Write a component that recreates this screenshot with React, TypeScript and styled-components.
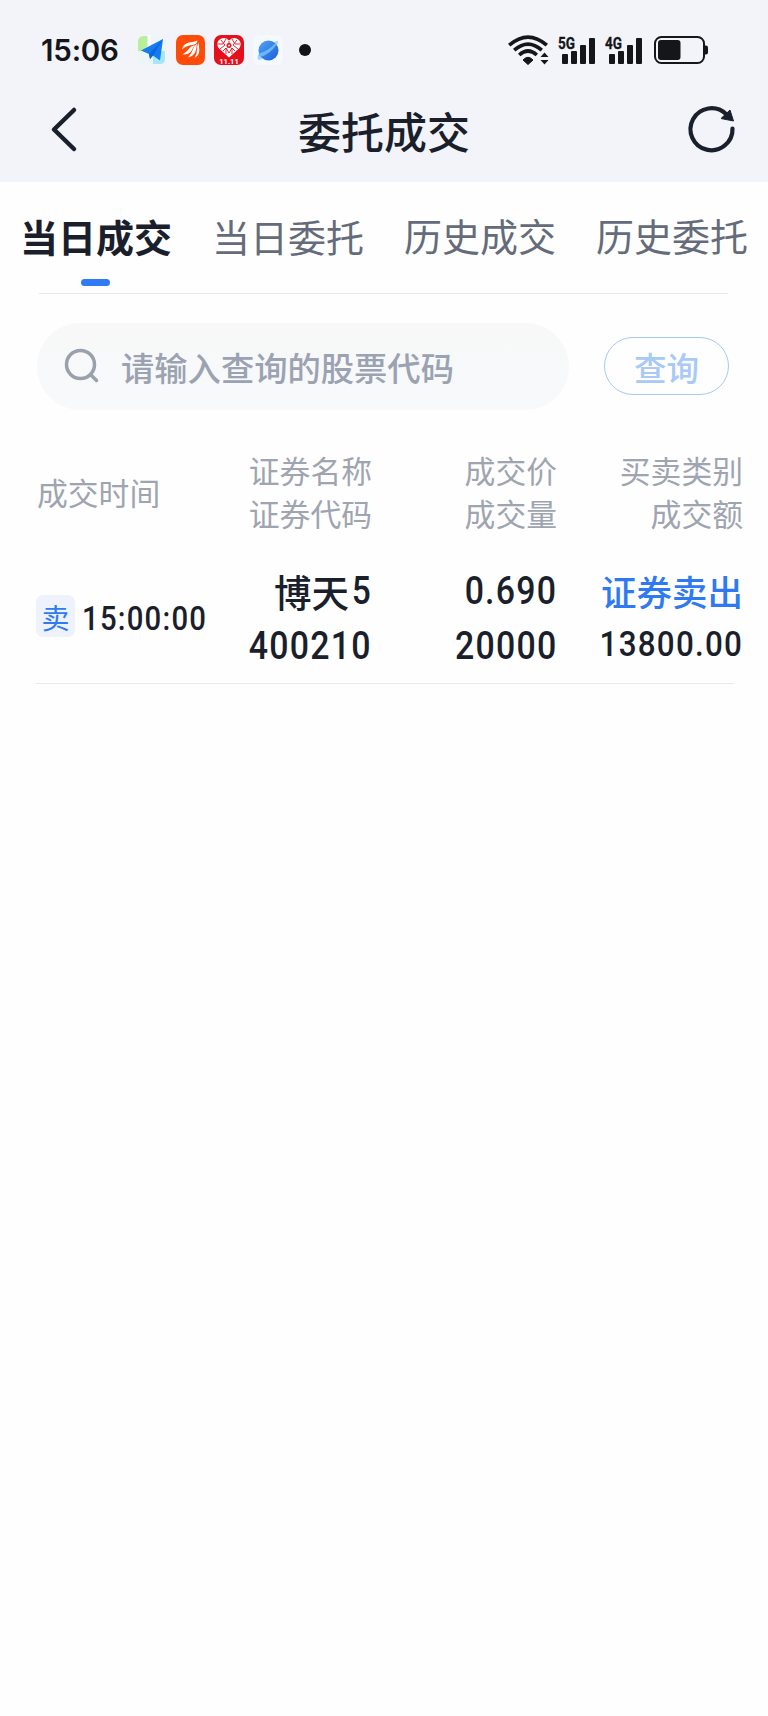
import React from 'react';
import styled, { createGlobalStyle } from 'styled-components';

const cjk = `"Noto Sans CJK SC", sans-serif`;

const GlobalStyle = createGlobalStyle`
  *, *::before, *::after { box-sizing: border-box; }
  body { margin: 0; background: #fefefe; }
  button, input { font: inherit; }
`;

const Screen = styled.div`
  display: flex;
  flex-direction: column;
  width: 768px;
  min-height: 1716px;
  background: #fefefe;
  color: #1a202b;
  font-family: ${cjk};
`;

const Top = styled.header`
  height: 182px;
  background: #f3f4f9;
`;

const StatusBar = styled.div`
  display: flex;
  align-items: center;
  height: 80px;
  padding: 20px 59px 0 41px;
  color: #14161a;
`;

const Clock = styled.span`
  width: 95px;
  font: 600 29.5px/60px Inter, sans-serif;
  letter-spacing: -0.2px;
  white-space: nowrap;
`;

const AppIcons = styled.div`
  display: flex;
  align-items: center;
  gap: 9px;
`;

const Signals = styled.div`
  display: flex;
  align-items: center;
  margin-left: auto;
`;

const SignalGroup = styled.div`
  display: flex;
  gap: 7px;
  margin: 0 10px 0 7px;
`;

const NavBar = styled.div`
  display: grid;
  grid-template-columns: 84px 1fr 84px;
  align-items: center;
  height: 101px;
`;

const NavButton = styled.button<{ $side: 'left' | 'right' }>`
  display: flex;
  justify-content: ${(p) => (p.$side === 'left' ? 'flex-end' : 'flex-start')};
  height: 101px;
  padding: ${(p) => (p.$side === 'left' ? '22px 5px 0 0' : '20px 0 0 0')};
  border: 0;
  background: none;
  color: #1a202b;
`;

const Title = styled.h1`
  margin: 0 0 1px;
  text-align: center;
  font-size: 43px;
  font-weight: 500;
  line-height: 60px;
`;

const Tabs = styled.nav`
  display: grid;
  grid-template-columns: repeat(4, 1fr);
  height: 111px;
`;

const Tab = styled.button<{ $active?: boolean; $raise?: boolean }>`
  display: flex;
  flex-direction: column;
  align-items: center;
  padding: ${(p) => (p.$raise ? 26 : 27)}px 0 0;
  border: 0;
  background: none;
  color: ${(p) => (p.$active ? '#1a202b' : '#646b7a')};
  font-size: 38px;
  font-weight: ${(p) => (p.$active ? 700 : 400)};
  line-height: 54px;
  white-space: nowrap;

  &::after {
    content: '';
    width: 29px;
    height: 7px;
    margin: 16px 1px 0 0;
    border-radius: 4px;
    background: ${(p) => (p.$active ? '#2f7af5' : 'transparent')};
  }
`;

const Divider = styled.hr<{ $left: number; $right: number }>`
  height: 1px;
  margin: 0 ${(p) => p.$right}px 0 ${(p) => p.$left}px;
  border: 0;
  background: #e8e9eb;
`;

const SearchRow = styled.form`
  display: flex;
  align-items: center;
  justify-content: space-between;
  height: 88px;
  margin: 28px 39px 0 37px;
`;

const SearchBox = styled.label`
  display: flex;
  align-items: center;
  width: 532px;
  height: 87px;
  padding-left: 27px;
  border-radius: 44px;
  background: linear-gradient(#f8f8f8, #f7f9fb);
`;

const Placeholder = styled.span`
  margin: 1px 0 0 21px;
  color: #9ba2b2;
  font-size: 33.3px;
  font-weight: 500;
  line-height: 48px;
  white-space: nowrap;
`;

const QueryButton = styled.button`
  width: 125px;
  height: 58px;
  padding: 1px 0 0;
  border: 1.5px solid #a9c8f3;
  border-radius: 29px;
  background: transparent;
  color: #a9c9f7;
  font-size: 32.5px;
  font-weight: 500;
  line-height: 52px;
`;

const columns = `
  display: grid;
  grid-template-columns: 176px 160px 185px 186px;
  padding-left: 36px;
`;

const HeadRow = styled.div`
  ${columns}
  align-items: center;
  margin-top: 38px;
  height: 86px;
  color: #9fa4b1;
  font-size: 30.8px;
  line-height: 43px;
`;

const HeadCell = styled.div<{ $align?: 'left' }>`
  display: flex;
  flex-direction: column;
  padding-left: ${(p) => (p.$align === 'left' ? 1 : 0)}px;
  text-align: ${(p) => p.$align ?? 'right'};
  white-space: nowrap;
`;

const TradeRow = styled.div`
  ${columns}
  align-items: center;
  height: 149px;
  padding-top: 16px;
`;

const TimeCell = styled.div`
  display: flex;
  align-items: center;
  margin-bottom: 1px;
`;

const SideBadge = styled.span`
  display: flex;
  align-items: center;
  justify-content: center;
  flex: none;
  width: 39px;
  height: 42px;
  margin-right: 7px;
  padding-top: 2px;
  border-radius: 7px;
  background: #edf2fd;
  color: #2f7af0;
  font-size: 28px;
  line-height: 40px;
`;

const Stack = styled.div`
  display: flex;
  flex-direction: column;
  align-items: flex-end;
  margin-top: 2px;
`;

const Figure = styled.span<{ $size: number; $shift?: number; $origin?: string }>`
  font-family: Roboto, ${cjk};
  font-size: ${(p) => p.$size}px;
  font-weight: 500;
  letter-spacing: 1.4px;
  line-height: 55px;
  white-space: nowrap;
  transform: translateY(${(p) => p.$shift ?? 0}px) scaleX(0.88);
  transform-origin: ${(p) => p.$origin ?? 'right'};
`;

const Label = styled.span<{ $size: number; $color?: string }>`
  font-size: ${(p) => p.$size}px;
  font-weight: 500;
  line-height: 55px;
  color: ${(p) => p.$color ?? 'inherit'};
  white-space: nowrap;
`;

const NameLine = styled.div`
  display: flex;
  align-items: center;
  height: 55px;
  margin-bottom: 0;
`;

const SignalBars = ({ label }: { label: string }) => (
  <svg width="40" height="32" viewBox="0 0 40 32" fill="currentColor">
    <text x="1" y="15" fontSize="16.5" fontWeight="700" fontFamily="Roboto, sans-serif" textLength="17" lengthAdjust="spacingAndGlyphs" stroke="currentColor" strokeWidth="0.3">{label}</text>
    <rect x="5" y="20" width="6" height="10" rx="1" />
    <rect x="14" y="17" width="6" height="13" rx="1" />
    <rect x="23" y="11" width="6" height="19" rx="1" />
    <rect x="32" y="4" width="6" height="26" rx="1" />
  </svg>
);

const Wifi = () => (
  <svg width="42" height="32" viewBox="0 0 42 32" fill="none" stroke="currentColor" strokeWidth="3.6">
    <path d="M1.2 11.2 Q20 -5 38.8 11.2" />
    <path d="M6.2 16.2 Q20 4 33.8 16.2" />
    <path d="M11.2 21 Q20 13 28.8 21" />
    <path d="M15 26 Q20 20.500 25 26 L20 30.500Z" fill="currentColor" strokeWidth="1" strokeLinejoin="round" />
    <path d="M32.5 23 L36.5 18.5 L40.5 23Z M32.5 26 L36.5 30.5 L40.5 26Z" fill="currentColor" stroke="none" />
  </svg>
);

const Battery = () => (
  <svg width="55" height="28" viewBox="0 0 55 28" fill="none">
    <rect x="1" y="1" width="49" height="26" rx="6.5" stroke="currentColor" strokeWidth="2" />
    <rect x="4" y="4" width="22.5" height="20" rx="3" fill="currentColor" />
    <path d="M51 9.5h1q2 0 2 2v5q0 2-2 2h-1z" fill="currentColor" />
  </svg>
);

const PlaneIcon = () => (
  <svg width="31" height="30" viewBox="0 0 31 30">
    <rect x="1" width="29" height="30" rx="7" fill="#edf5f7" />
    <path d="M8 1h4v15H2V7Q2 1 8 1z" fill="#b7ef9c" />
    <path d="M17 16h12v8q0 5-5 5h-7z" fill="#a5e6fb" />
    <path d="M13 0v17" stroke="#fff" strokeWidth="3" />
    <path d="M27 4L5 15.5l8 3.5 1 5 3-3.5 7 5z" fill="#147bf1" />
    <path d="M27 4L13 19l1 5 3-3.500z" fill="#0b68e0" />
  </svg>
);

const WingIcon = () => (
  <svg width="29" height="30" viewBox="0 0 29 30">
    <rect width="29" height="30" rx="7" fill="#ff4b09" />
    <g fill="#fff">
      <path d="M6 14.500Q7 9 13 7.500Q18 7 21.500 5.500Q21 9.500 16 10Q10 10.800 6 14.500z" />
      <path d="M6.500 19.500Q12 16 14 12.500Q16 10.800 19 10.300Q17 12.500 16 15Q13 20 6.500 19.500z" />
      <path d="M12 22.500Q16 18 17 14Q18 11 21 8.500Q20.500 11.500 20 15Q18.500 21 12 22.500z" />
      <path d="M18.500 23Q21 19 21 14.500Q21 10.500 22.500 7.500Q23 11 23.300 15Q23.300 20.500 18.500 23z" />
    </g>
  </svg>
);

const HeartIcon = () => (
  <svg width="30" height="30" viewBox="0 0 30 30">
    <rect width="30" height="30" rx="7" fill="#e60f1c" />
    <path d="M15 22.500L4.500 13Q2 8 5 5Q10 1 15 5.500Q20 1 25 5Q28 8 25.500 13z" fill="#fff" />
    <path d="M4 9h5l3-5M26 9h-5l-3-5M7 5l4 5-5 4M23 5l-4 5 5 4M9 16l3-3 3 5 3-5 3 3M12 13v6M18 13v6M15 6v3" stroke="#e60f1c" strokeWidth="0.9" fill="none" />
    <circle cx="15" cy="10.5" r="2.5" fill="#e60f1c" />
    <circle cx="15" cy="10.5" r="1" fill="#fff" />
    <text x="15" y="28.7" fill="#fff" fontSize="7.5" fontWeight="700" fontFamily="Roboto, sans-serif" textAnchor="middle">11.11</text>
  </svg>
);

const PlanetIcon = () => (
  <svg width="30" height="30" viewBox="0 0 30 30">
    <defs>
      <linearGradient id="planet" x1="0" y1="0" x2="1" y2="1">
        <stop offset="0" stopColor="#4fa5f8" />
        <stop offset="1" stopColor="#1c5cd9" />
      </linearGradient>
    </defs>
    <rect width="30" height="30" rx="7" fill="#f5f8fc" />
    <path d="M6 17Q3 25.500 6 25Q18 23 25 8Q26 4.500 22 6.500z" fill="#a8d9fb" />
    <circle cx="15.500" cy="15.500" r="10" fill="url(#planet)" />
    <path d="M6 18.500Q5.500 21 7.500 22Q17 19 23.500 9.500L22 8.500Q15 16 6 18.500z" fill="#6db8fa" />
  </svg>
);

const Dot = styled.i`
  width: 12px;
  height: 12px;
  margin-left: 7px;
  border-radius: 50%;
  background: #111317;
`;

export default function App() {
  return (
    <>
      <GlobalStyle />
      <Screen>
        <Top>
          <StatusBar>
            <Clock>15:06</Clock>
            <AppIcons>
              <PlaneIcon />
              <WingIcon />
              <HeartIcon />
              <PlanetIcon />
              <Dot />
            </AppIcons>
            <Signals>
              <Wifi />
              <SignalGroup>
                <SignalBars label="5G" />
                <SignalBars label="4G" />
              </SignalGroup>
              <Battery />
            </Signals>
          </StatusBar>
          <NavBar>
            <NavButton $side="left" aria-label="返回">
              <svg width="30" height="56" viewBox="0 0 30 56" fill="none" stroke="currentColor" strokeWidth="4.5" strokeLinecap="round" strokeLinejoin="round">
                <path d="M25 8L5 27.5L25 47" />
              </svg>
            </NavButton>
            <Title>委托成交</Title>
            <NavButton $side="right" aria-label="刷新">
              <svg width="56" height="60" viewBox="0 0 56 60" fill="none" stroke="currentColor" strokeWidth="4.2">
                <path d="M48.5 28.5A21 21 0 1 1 42 14" strokeLinecap="round" />
                <path d="M46 10L49.5 21L37 18.5z" fill="currentColor" strokeWidth="1" strokeLinejoin="round" />
              </svg>
            </NavButton>
          </NavBar>
        </Top>
        <Tabs>
          <Tab $active>当日成交</Tab>
          <Tab>当日委托</Tab>
          <Tab $raise>历史成交</Tab>
          <Tab $raise>历史委托</Tab>
        </Tabs>
        <Divider $left={39} $right={40} />
        <SearchRow>
          <SearchBox>
            <svg width="36" height="36" viewBox="0 0 36 36" fill="none" stroke="#9aa1ad" strokeWidth="3.5" strokeLinecap="round">
              <circle cx="16.5" cy="16.5" r="14" />
              <path d="M27 27l5.5 5.5" />
            </svg>
            <Placeholder>请输入查询的股票代码</Placeholder>
          </SearchBox>
          <QueryButton type="button">查询</QueryButton>
        </SearchRow>
        <HeadRow>
          <HeadCell $align="left">成交时间</HeadCell>
          <HeadCell><span>证券名称</span><span>证券代码</span></HeadCell>
          <HeadCell><span>成交价</span><span>成交量</span></HeadCell>
          <HeadCell><span>买卖类别</span><span>成交额</span></HeadCell>
        </HeadRow>
        <TradeRow>
          <TimeCell>
            <SideBadge>卖</SideBadge>
            <Figure $size={33.3} $shift={2} $origin="left">15:00:00</Figure>
          </TimeCell>
          <Stack>
            <NameLine>
              <Label $size={37.5}>博天</Label>
              <Figure $size={38} $shift={1}>5</Figure>
            </NameLine>
            <Figure $size={38.5}>400210</Figure>
          </Stack>
          <Stack>
            <Figure $size={38.5}>0.690</Figure>
            <Figure $size={38.5}>20000</Figure>
          </Stack>
          <Stack>
            <Label $size={35.5} $color="#2f7af0">证券卖出</Label>
            <Figure $size={35.7} $shift={-1}>13800.00</Figure>
          </Stack>
        </TradeRow>
        <Divider $left={36} $right={34} />
      </Screen>
    </>
  );
}
